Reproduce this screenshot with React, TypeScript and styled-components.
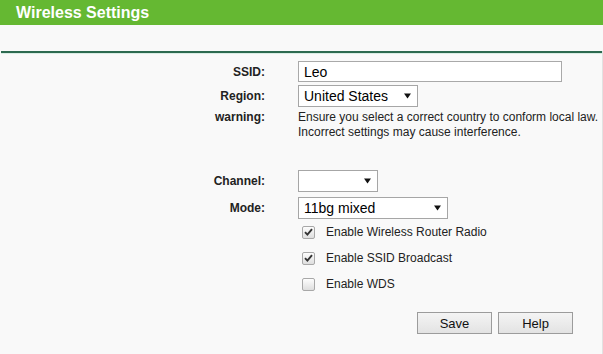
import styled, { createGlobalStyle } from 'styled-components';

const GlobalStyle = createGlobalStyle`
  html, body {
    margin: 0;
    padding: 0;
    background: #f9f9f9;
    font-family: "Liberation Sans", Arial, sans-serif;
    color: #222;
  }
`;

const Page = styled.div`
  width: 603px;
  height: 354px;
  background: #f9f9f9;
  overflow: hidden;
`;

const TitleBar = styled.div`
  height: 25px;
  background: #65b832;
  color: #fff;
  font-size: 16px;
  font-weight: bold;
  line-height: 25px;
  padding-left: 16px;
`;

const Body = styled.div`
  border-right: 1px solid #e2e2e2;
  height: 329px;
  box-sizing: border-box;
`;

const Divider = styled.div`
  margin: 26px 0 0 1px;
  height: 2px;
  background: #2d6a50;
  border-bottom: 1px solid #d9ede4;
`;

const Form = styled.div`
  padding-top: 7px;
`;

const Row = styled.div<{ $top?: number; $h?: number; $start?: boolean }>`
  display: grid;
  grid-template-columns: 265px 1fr;
  column-gap: 33px;
  align-items: ${(p) => (p.$start ? 'start' : 'center')};
  margin-top: ${(p) => p.$top ?? 0}px;
  min-height: ${(p) => p.$h ?? 21}px;
`;

const Label = styled.div<{ $lh?: number }>`
  text-align: right;
  font-size: 12px;
  font-weight: bold;
  color: #222;
  line-height: ${(p) => (p.$lh ? `${p.$lh}px` : 'normal')};
`;

const TextInput = styled.input`
  box-sizing: border-box;
  width: 264px;
  height: 21px;
  border: 1px solid #a9a9a9;
  background: #fff;
  padding: 0 0 0 5px;
  font-family: "Liberation Sans", Arial, sans-serif;
  font-size: 14px;
  color: #000;
  outline: none;
`;

const SelectBox = styled.div<{ $w: number }>`
  box-sizing: border-box;
  width: ${(p) => p.$w}px;
  height: 22px;
  border: 1px solid #a6a6a6;
  background: #fff;
  display: flex;
  align-items: center;
  justify-content: space-between;
  padding: 0 6px 0 5px;
  font-size: 14px;
  color: #000;
`;

const Note = styled.div`
  font-size: 12px;
  line-height: 15px;
  color: #222;
`;

const CheckRow = styled.label`
  display: flex;
  align-items: center;
  height: 26px;
  padding-left: 4px;
  font-size: 12px;
  color: #222;
`;

const Box = styled.span`
  box-sizing: border-box;
  width: 13px;
  height: 13px;
  border: 1px solid #a8a8a8;
  border-radius: 2px;
  background: linear-gradient(#fdfdfd, #dedede);
  margin-right: 11px;
  display: flex;
  align-items: center;
  justify-content: center;
`;

const Buttons = styled.div`
  display: flex;
  gap: 6px;
  padding-left: 119px;
`;

const Button = styled.button`
  box-sizing: border-box;
  width: 75px;
  height: 22px;
  border: 1px solid #9c9c9c;
  border-radius: 0;
  background: linear-gradient(#f4f4f4, #e3e3e3);
  font-family: "Liberation Sans", Arial, sans-serif;
  font-size: 13px;
  color: #111;
  padding: 0;
`;

function Arrow() {
  return (
    <svg width="7" height="6" viewBox="0 0 7 6">
      <path d="M0 0.5 L7 0.5 L3.5 5.5 Z" fill="#111" />
    </svg>
  );
}

function Check({ on }: { on: boolean }) {
  return (
    <Box>
      {on && (
        <svg width="9" height="8" viewBox="0 0 9 8">
          <path d="M1 4.2 L3.4 6.6 L8 1.2" fill="none" stroke="#333" strokeWidth="1.9" />
        </svg>
      )}
    </Box>
  );
}

export default function App() {
  return (
    <Page>
      <GlobalStyle />
      <TitleBar>Wireless Settings</TitleBar>
      <Body>
        <Divider />
        <Form>
          <Row>
            <Label>SSID:</Label>
            <div><TextInput defaultValue="Leo" /></div>
          </Row>
          <Row $top={3}>
            <Label>Region:</Label>
            <SelectBox $w={120}>
              <span>United States</span>
              <Arrow />
            </SelectBox>
          </Row>
          <Row $top={3} $start>
            <Label $lh={15}>warning:</Label>
            <Note>
              Ensure you select a correct country to conform local law.
              <br />
              Incorrect settings may cause interference.
            </Note>
          </Row>
          <Row $top={30}>
            <Label>Channel:</Label>
            <SelectBox $w={80}>
              <span />
              <Arrow />
            </SelectBox>
          </Row>
          <Row $top={5}>
            <Label>Mode:</Label>
            <SelectBox $w={150}>
              <span>11bg mixed</span>
              <Arrow />
            </SelectBox>
          </Row>
          <Row>
            <span />
            <div>
              <CheckRow><Check on />Enable Wireless Router Radio</CheckRow>
              <CheckRow><Check on />Enable SSID Broadcast</CheckRow>
              <CheckRow><Check on={false} />Enable WDS</CheckRow>
            </div>
          </Row>
          <Row $top={15}>
            <span />
            <Buttons>
              <Button>Save</Button>
              <Button>Help</Button>
            </Buttons>
          </Row>
        </Form>
      </Body>
    </Page>
  );
}
